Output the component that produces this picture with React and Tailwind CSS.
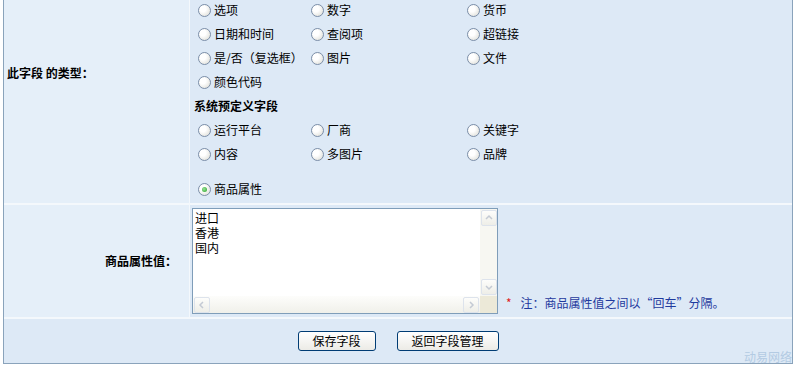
const typeRows = [
  ["选项", "数字", "货币"],
  ["日期和时间", "查阅项", "超链接"],
  ["是/否（复选框）", "图片", "文件"],
  ["颜色代码"],
];

const systemRows = [
  ["运行平台", "厂商", "关键字"],
  ["内容", "多图片", "品牌"],
];

function Radio({ label, checked }) {
  return (
    <label className="flex items-center gap-[3px] whitespace-nowrap">
      <span className="relative grid h-[13px] w-[13px] shrink-0 place-items-center rounded-full border border-[#7b8ea8] bg-[radial-gradient(circle_at_35%_35%,#ffffff_30%,#d8d8d0_100%)]">
        {checked && <span className="h-[5px] w-[5px] rounded-full bg-[radial-gradient(circle_at_40%_40%,#9be39b,#22a022)]" />}
      </span>
      <span>{label}</span>
    </label>
  );
}

function RadioRow({ items }) {
  return (
    <div className="grid h-[24px] grid-cols-[113px_156px_1fr] items-center">
      {items.map((item) => (
        <Radio key={item} label={item} />
      ))}
    </div>
  );
}

function ScrollArrow({ dir }) {
  const paths = {
    up: "M2 6 L5 3 L8 6",
    down: "M2 4 L5 7 L8 4",
    left: "M6 2 L3 5 L6 8",
    right: "M4 2 L7 5 L4 8",
  };
  return (
    <div className="grid h-[16px] w-[16px] place-items-center rounded-[2px] border border-[#dde3ec] bg-[linear-gradient(#fdfdfb,#eeeee8)]">
      <svg viewBox="0 0 10 10" className="h-[10px] w-[10px]">
        <path d={paths[dir]} fill="none" stroke="#c4cad4" strokeWidth="1.5" />
      </svg>
    </div>
  );
}

export default function App() {
  return (
    <div className="relative h-[366px] w-[796px] overflow-hidden bg-white font-['Noto_Sans_CJK_SC','Noto_Sans',sans-serif] text-[12px] text-black">
      <div className="ml-[3px] w-[790px] border-x border-b border-[#8aa3bb]">
        {/* field type */}
        <div className="grid grid-cols-[186px_1fr] border-b-2 border-[#f4f8fc]">
          <div className="border-r border-[#f4f8fc] bg-[#e5eff9] pl-[3px] pt-[64px] font-bold">此字段 的类型：</div>
          <div className="bg-[#dde9f6] pl-[8px]">
            <div className="-mt-[2px]">
              {typeRows.map((row, i) => (
                <RadioRow key={i} items={row} />
              ))}
              <div className="-ml-[4px] flex h-[24px] items-center font-bold">系统预定义字段</div>
              {systemRows.map((row, i) => (
                <RadioRow key={i} items={row} />
              ))}
              <div className="h-[11px]" />
              <div className="flex h-[24px] items-center">
                <Radio label="商品属性" checked />
              </div>
              <div className="h-[2px]" />
            </div>
          </div>
        </div>

        {/* attribute values */}
        <div className="grid grid-cols-[186px_1fr] border-b-2 border-[#f4f8fc]">
          <div className="flex items-center justify-end border-r border-[#f4f8fc] bg-[#e5eff9] pr-[12px] font-bold">商品属性值：</div>
          <div className="flex items-end gap-[8px] bg-[#dde9f6] py-[3px] pl-[2px]">
            <div className="grid h-[106px] w-[306px] grid-cols-[1fr_17px] grid-rows-[1fr_17px] border border-[#7f9db9] bg-white">
              <div className="px-[2px] pt-[1px] leading-[15px]">
                <div>进口</div>
                <div>香港</div>
                <div>国内</div>
              </div>
              <div className="flex flex-col justify-between bg-[#f7f7f2] p-[1px]">
                <ScrollArrow dir="up" />
                <ScrollArrow dir="down" />
              </div>
              <div className="flex justify-between bg-[linear-gradient(#fdfdfb,#f0f0ea)] p-[1px]">
                <ScrollArrow dir="left" />
                <ScrollArrow dir="right" />
              </div>
              <div className="bg-[#ece9d8]" />
            </div>
            <div className="flex items-center gap-[9px] pb-[2px]">
              <span className="text-[#e02020]">*</span>
              <span className="text-[#1f3a9e]">注：商品属性值之间以“回车”分隔。</span>
            </div>
          </div>
        </div>

        {/* buttons */}
        <div className="flex h-[44px] items-center justify-center gap-[21px] bg-[#dde9f6] pb-[1px]">
          <button className="h-[20px] w-[78px] rounded-[3px] border border-[#003c74] bg-[linear-gradient(#ffffff,#ecebe6)] text-[12px] leading-none">
            保存字段
          </button>
          <button className="h-[20px] w-[102px] rounded-[3px] border border-[#003c74] bg-[linear-gradient(#ffffff,#ecebe6)] text-[12px] leading-none">
            返回字段管理
          </button>
        </div>
      </div>
      <span className="absolute left-[744px] top-[351px] text-[12px] leading-none text-[#b3cbe3]">动易网络</span>
    </div>
  );
}
